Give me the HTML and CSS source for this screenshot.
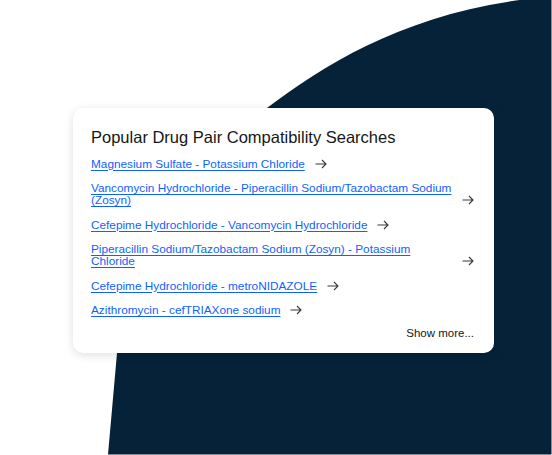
FILE: index.html
```html
<!DOCTYPE html>
<html lang="en">
<head>
<meta charset="utf-8">
<title>Popular Drug Pair Compatibility Searches</title>
<link rel="stylesheet" href="styles.css">
</head>
<body>
<svg class="backdrop" width="552" height="455" viewBox="0 0 552 455" aria-hidden="true">
  <path d="M108,454.5 L117,353 C140,250 180,150 267,108 C330,60 420,5 560,-4 L551.5,-4 L551.5,454.5 Z" fill="#062239"/>
</svg>
<main class="stage">
  <section class="card">
    <h2 class="card-title">Popular Drug Pair Compatibility Searches</h2>
    <ul class="pairs">
      <li class="pair"><a class="pair-link" href="#">Magnesium Sulfate - Potassium Chloride</a><svg class="arrow" viewBox="0 0 12 12"><path d="M0.5 6H11M7 2l4 4-4 4"/></svg></li>
      <li class="pair"><a class="pair-link" href="#">Vancomycin Hydrochloride - Piperacillin Sodium/Tazobactam Sodium (Zosyn)</a><svg class="arrow" viewBox="0 0 12 12"><path d="M0.5 6H11M7 2l4 4-4 4"/></svg></li>
      <li class="pair"><a class="pair-link" href="#">Cefepime Hydrochloride - Vancomycin Hydrochloride</a><svg class="arrow" viewBox="0 0 12 12"><path d="M0.5 6H11M7 2l4 4-4 4"/></svg></li>
      <li class="pair"><a class="pair-link" href="#">Piperacillin Sodium/Tazobactam Sodium (Zosyn) - Potassium Chloride</a><svg class="arrow" viewBox="0 0 12 12"><path d="M0.5 6H11M7 2l4 4-4 4"/></svg></li>
      <li class="pair"><a class="pair-link" href="#">Cefepime Hydrochloride - metroNIDAZOLE</a><svg class="arrow" viewBox="0 0 12 12"><path d="M0.5 6H11M7 2l4 4-4 4"/></svg></li>
      <li class="pair"><a class="pair-link" href="#">Azithromycin - cefTRIAXone sodium</a><svg class="arrow" viewBox="0 0 12 12"><path d="M0.5 6H11M7 2l4 4-4 4"/></svg></li>
    </ul>
    <div class="more-row"><a class="show-more" href="#">Show more...</a></div>
  </section>
</main>
</body>
</html>
```
FILE: styles.css
```css
html, body {
  margin: 0;
  padding: 0;
  background: #ffffff;
  width: 552px;
  height: 455px;
  overflow: hidden;
}

body {
  position: relative;
  font-family: "Liberation Sans", Arial, sans-serif;
  color: #161616;
}

.backdrop {
  position: absolute;
  left: 0;
  top: 0;
  z-index: 0;
}

.stage {
  position: relative;
  z-index: 1;
  padding: 108px 0 0 73px;
}

.card {
  width: 421px;
  box-sizing: border-box;
  padding: 18px 20px 11.7px 18px;
  background: #ffffff;
  border-radius: 10px;
  box-shadow: 0 2px 10px rgba(0, 0, 0, 0.13);
}

.card-title {
  margin: 0;
  font-size: 16.5px;
  line-height: 22px;
  font-weight: 400;
  color: #161616;
}

.pairs {
  list-style: none;
  margin: 9.5px 0 0;
  padding: 0;
  display: flex;
  flex-direction: column;
  gap: 12.5px;
}

.pair {
  display: flex;
  align-items: flex-end;
  gap: 10px;
}

.pair-link {
  flex: 0 1 auto;
  max-width: 361px;
  font-size: 11.8px;
  line-height: 12px;
  color: #0f62fe;
  text-decoration: underline;
  text-underline-offset: 1.5px;
}

.arrow {
  flex: none;
  width: 12px;
  height: 12px;
  fill: none;
  stroke: #393939;
  stroke-width: 1.1;
}

.more-row {
  display: flex;
  justify-content: flex-end;
  margin-top: 9.3px;
}

.show-more {
  font-size: 11.5px;
  line-height: 16px;
  color: #161616;
  text-decoration: none;
}
```
